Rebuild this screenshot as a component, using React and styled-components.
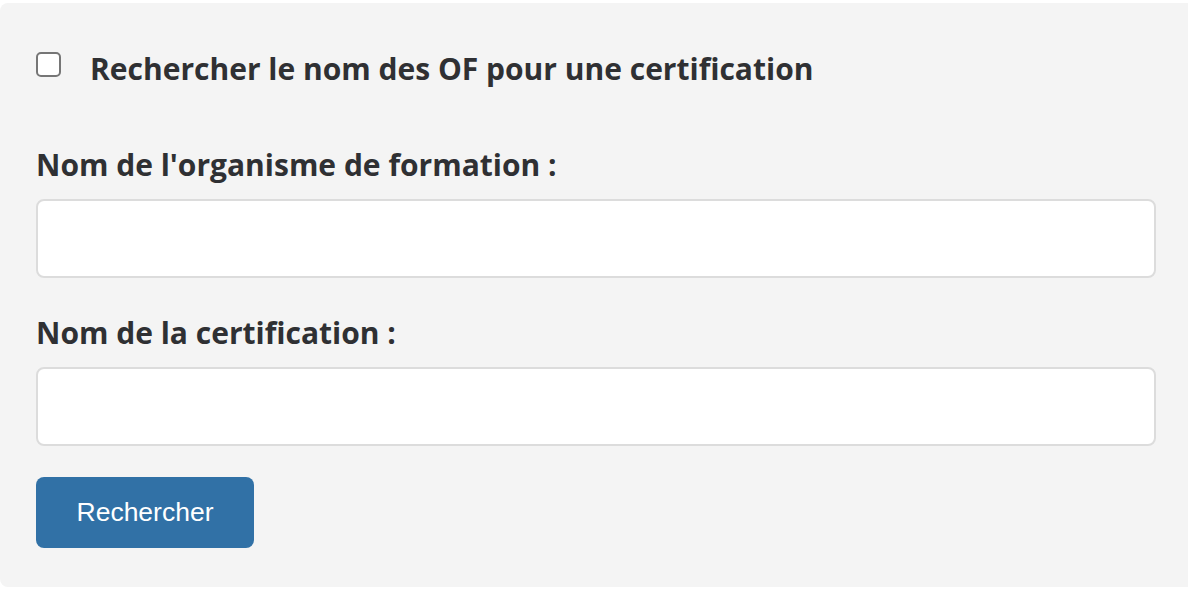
import React from "react";
import styled, { createGlobalStyle } from "styled-components";

const GlobalStyle = createGlobalStyle`
  body {
    margin: 0;
    background: #ffffff;
    font-family: "Open Sans", "Liberation Sans", sans-serif;
  }
`;

export default function App() {
  return (
    <>
      <GlobalStyle />
      <Panel>
        <CheckRow>
          <Box type="checkbox" id="of-certif" />
          <CheckLabel htmlFor="of-certif">
            Rechercher le nom des OF pour une certification
          </CheckLabel>
        </CheckRow>
        <Field gap="35px">
          <FieldLabel htmlFor="organisme">Nom de l'organisme de formation :</FieldLabel>
          <Input id="organisme" type="text" />
        </Field>
        <Field gap="31px">
          <FieldLabel htmlFor="certification">Nom de la certification :</FieldLabel>
          <Input id="certification" type="text" />
        </Field>
        <Button type="button">Rechercher</Button>
      </Panel>
    </>
  );
}

const Panel = styled.div`
  margin-top: 3px;
  width: 1200px;
  height: 584px;
  box-sizing: border-box;
  background: #f4f4f4;
  border-radius: 8px;
  padding: 42px 32px 0 36px;
  display: flex;
  flex-direction: column;
  align-items: flex-start;
`;

const CheckRow = styled.div`
  display: flex;
  align-items: center;
  height: 44px;
  margin-bottom: 56px;
`;

const Box = styled.input`
  appearance: none;
  margin: 0 29px 5px 0;
  width: 25px;
  height: 25px;
  box-sizing: border-box;
  border: 2px solid #767676;
  border-radius: 5px;
  background: #ffffff;
`;

const CheckLabel = styled.label`
  font-size: 30px;
  font-weight: 700;
  color: #2f3033;
  line-height: 40px;
  padding-top: 4px;
`;

const Field = styled.div`
  display: flex;
  flex-direction: column;
  align-self: stretch;
  margin-bottom: ${(p) => p.gap};
`;

const FieldLabel = styled.label`
  font-size: 30px;
  font-weight: 700;
  color: #2f3033;
  line-height: 40px;
  margin-bottom: 14px;
`;

const Input = styled.input`
  width: 1120px;
  height: 79px;
  box-sizing: border-box;
  border: 2px solid #dcdcdc;
  border-radius: 8px;
  background: #ffffff;
  outline: none;
  font-size: 28px;
  padding: 0 16px;
`;

const Button = styled.button`
  width: 218px;
  height: 71px;
  border: none;
  border-radius: 8px;
  background: #3171a6;
  color: #ffffff;
  font-family: "Liberation Sans", Arial, sans-serif;
  font-size: 26.5px;
  cursor: pointer;
`;
